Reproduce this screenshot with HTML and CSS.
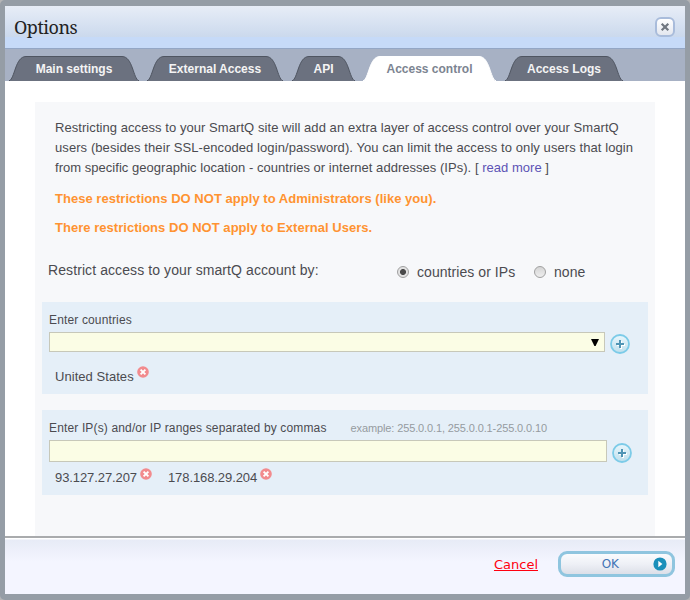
FILE: index.html
```
<!DOCTYPE html>
<html lang="en">
<head>
<meta charset="utf-8">
<title>Options</title>
<link rel="stylesheet" href="styles.css">
</head>
<body>
<svg class="defs" width="0" height="0" aria-hidden="true">
  <defs>
    <linearGradient id="plusFill" x1="0" y1="0" x2="0" y2="1"><stop offset="0" stop-color="#e9f7fd"/><stop offset="1" stop-color="#bfdfec"/></linearGradient>
    <symbol id="remove" viewBox="0 0 12 12"><circle cx="6" cy="6" r="5.8" fill="#f28b8e"/><path d="M3.6 3.6l4.8 4.8M8.4 3.6L3.6 8.4" stroke="#fff" stroke-width="1.9"/></symbol>
    <symbol id="plus" viewBox="0 0 20 20"><circle cx="10" cy="10" r="9" fill="url(#plusFill)" stroke="#7ccbe8" stroke-width="1.8"/><path d="M11 7v8M7 11h8" stroke="#fff" stroke-width="2"/><path d="M10 6v8M6 10h8" stroke="#5095b5" stroke-width="2"/></symbol>
    <symbol id="side" viewBox="0 0 17 25"><path d="M0 25C6 23 6 .5 17 .5V25Z"/><path class="edge" d="M0 24.8C6 23 6 .5 17 .5"/></symbol>
  </defs>
</svg>
<div class="dialog">
  <header class="header">
    <h1>Options</h1>
    <button class="close" aria-label="Close"><svg width="10" height="10" viewBox="0 0 10 10"><path d="M1.7 1.7l6.6 6.6M8.3 1.7L1.7 8.3" stroke="#707780" stroke-width="2.2"/></svg></button>
  </header>
  <nav class="tabs">
    <a class="tab w-main"><svg class="side"><use href="#side"/></svg><span class="mid"><span>Main settings</span></span><svg class="side right"><use href="#side"/></svg></a>
    <a class="tab w-ext"><svg class="side"><use href="#side"/></svg><span class="mid"><span>External Access</span></span><svg class="side right"><use href="#side"/></svg></a>
    <a class="tab w-api"><svg class="side"><use href="#side"/></svg><span class="mid"><span>API</span></span><svg class="side right"><use href="#side"/></svg></a>
    <a class="tab w-ctl active"><svg class="side"><use href="#side"/></svg><span class="mid"><span>Access control</span></span><svg class="side right"><use href="#side"/></svg></a>
    <a class="tab w-log"><svg class="side"><use href="#side"/></svg><span class="mid"><span>Access Logs</span></span><svg class="side right"><use href="#side"/></svg></a>
  </nav>
  <main class="body">
    <div class="panel">
      <p class="intro"><span class="l1">Restricting access to your SmartQ site will add an extra layer of access control over your SmartQ</span><br><span class="l2">users (besides their SSL-encoded login/password). You can limit the access to only users that login</span><br><span class="l3">from specific geographic location - countries or internet addresses (IPs). [ <a>read more</a> ]</span></p>
      <p class="warn">These restrictions DO NOT apply to Administrators (like you).</p>
      <p class="warn">There restrictions DO NOT apply to External Users.</p>
      <div class="choice">
        <span class="question">Restrict access to your smartQ account by:</span>
        <label class="opt first"><i class="radio on"></i><span>countries or IPs</span></label>
        <label class="opt"><i class="radio"></i><span>none</span></label>
      </div>
      <section class="box countries">
        <div class="caption"><span>Enter countries</span></div>
        <div class="row"><div class="field select"><svg width="8" height="7" viewBox="0 0 8 7"><path d="M0 0h8L4.6 7h-1.2Z"/></svg></div><svg class="plus"><use href="#plus"/></svg></div>
        <div class="items"><span class="item"><span>United States</span><svg class="remove"><use href="#remove"/></svg></span></div>
      </section>
      <section class="box ips">
        <div class="caption"><span>Enter IP(s) and/or IP ranges separated by commas</span><span class="hint">example: 255.0.0.1, 255.0.0.1-255.0.0.10</span></div>
        <div class="row"><div class="field"></div><svg class="plus"><use href="#plus"/></svg></div>
        <div class="items"><span class="item"><span>93.127.27.207</span><svg class="remove"><use href="#remove"/></svg></span><span class="item"><span>178.168.29.204</span><svg class="remove"><use href="#remove"/></svg></span></div>
      </section>
    </div>
  </main>
  <footer class="footer">
    <a class="cancel">Cancel</a>
    <button class="ok"><span>OK</span><svg width="14" height="14" viewBox="0 0 14 14"><circle cx="7" cy="7" r="6.6" fill="#1a8fba"/><path d="M5.3 3.7L9.4 7l-4.1 3.3Z" fill="#fff"/></svg></button>
  </footer>
</div>
</body>
</html>
```
FILE: styles.css
```
* { box-sizing: border-box; }
body { margin: 0; width: 690px; height: 600px; overflow: hidden; background: #b4b5b7; font-family: "Liberation Sans", Arial, sans-serif; color: #4b4b50; }
h1, p { margin: 0; }
button { padding: 0; font: inherit; }
.defs { position: absolute; }
.dialog { width: 690px; height: 600px; display: flex; flex-direction: column; background: #fff; border: solid #959da6; border-width: 6px 5px; border-radius: 5px; }
.header { height: 42px; flex: none; display: flex; justify-content: space-between; padding: 11px 10px 0 9px; background: linear-gradient(#e7edf7, #cbd9ed 31px, #c6daf8 31px); }
.header h1 { font: 400 18px/20px "Noto Serif", "Droid Serif", "DejaVu Serif", serif; letter-spacing: -.5px; color: #222; }
.close { width: 20px; height: 20px; border: 2px solid #a9bcdb; border-radius: 6px; background: linear-gradient(#fff, #e3e7ef); display: grid; place-items: center; }
.tabs { height: 33px; flex: none; display: flex; gap: 8px; padding: 7px 0 0 4px; background: #a7b1c4; border-top: 1px solid #93a6c5; }
.tab { display: flex; height: 25px; fill: #6b717f; font-weight: 700; font-size: 12px; color: #f4f4f4; }
.side { width: 17px; height: 25px; flex: none; }
.right { transform: scaleX(-1); }
.edge { fill: none; stroke: var(--e, #4f5561); stroke-width: 1; }
.mid { flex: 1; background: #6b717f; border-top: 1px solid #4f5561; line-height: 24px; white-space: nowrap; display: flex; justify-content: center; }
.active { fill: #fff; color: #7c8491; }
.active .mid { background: #fff; border-color: #fff; }
.active svg { --e: #fff; }
.w-main { width: 130px; }
.w-ext { width: 136px; }
.w-api { width: 63px; margin-left: 1px; }
.w-ctl { width: 133px; }
.w-log { width: 118px; margin-left: 1px; }
.body { flex: 1; padding: 21px 30px 0; min-height: 0; }
.panel { height: 434px; background: #f7f8fa; padding: 16px 7px 0; overflow: hidden; white-space: nowrap; }
.intro { font-size: 13px; line-height: 20px; padding-left: 13px; height: 60px; }
.l1 { letter-spacing: .062px; }
.l2 { letter-spacing: .08px; }
.l3 { letter-spacing: .03px; }
.intro a { color: #5c53b5; }
.warn { font-size: 13px; font-weight: 700; color: #ff9331; padding-left: 13px; height: 29px; line-height: 42px; letter-spacing: .03px; }
.choice { display: flex; height: 66px; padding: 24px 0 0 6px; font-size: 14px; line-height: 24px; }
.question { width: 349px; line-height: 20px; letter-spacing: .09px; }
.opt { display: flex; align-items: center; height: 24px; letter-spacing: .06px; }
.first { width: 137px; }
.radio { width: 12px; height: 12px; margin-right: 8px; border: 1px solid #a0a0a0; border-radius: 50%; background: linear-gradient(#d5d5d5, #eee); }
.on { background: radial-gradient(circle, #4a4a4a 0 2.6px, #e2e2e2 3.4px); }
.box { width: 606px; background: #e5eff8; padding: 0 7px; font-size: 12px; }
.countries { height: 92px; margin-bottom: 16px; }
.ips { height: 85px; }
.caption { height: 30px; padding-top: 8px; line-height: 20px; display: flex; letter-spacing: .145px; }
.row { display: flex; gap: 5px; }
.field { width: 558px; height: 22px; border: 1px solid #c7c8b9; background: #fbfde5; }
.select { width: 556px; height: 20px; display: flex; justify-content: flex-end; align-items: center; padding-right: 5px; }
.plus { width: 20px; height: 20px; margin-top: 2px; margin-bottom: -2px; }
.ips .plus { margin-top: 3px; margin-bottom: -3px; }
.items { padding-left: 6px; display: flex; gap: 16px; height: 32px; line-height: 32px; font-size: 13px; letter-spacing: -.09px; }
.countries .items { padding-top: 9px; height: 40px; letter-spacing: .05px; }
.item { display: flex; }
.remove { width: 12px; height: 12px; margin: 6px 0 0 3px; }
.countries .remove { margin-top: 5px; }
.hint { font-size: 11px; letter-spacing: -.12px; color: #959ba0; margin-left: 24px; line-height: 21px; }
.footer { height: 58px; flex: none; border-top: 2px solid #a9abad; background: linear-gradient(#fff 1px, #e7ebf6 2px, #f4f5ff 24px); display: flex; justify-content: flex-end; padding: 13px 10px 0 0; gap: 20px; font-family: "DejaVu Sans", Verdana, sans-serif; font-size: 13px; }
.cancel { color: #ff0010; text-decoration: underline; line-height: 28px; }
.ok { width: 117px; height: 26px; border: 3px solid #8fc5df; border-radius: 9px; background: linear-gradient(#fafbfd, #eef0f6 50%, #dcdfe8); display: flex; align-items: center; justify-content: flex-end; gap: 34px; padding-right: 5px; color: #4374b5; font-size: 12px; line-height: 20px; }
```
